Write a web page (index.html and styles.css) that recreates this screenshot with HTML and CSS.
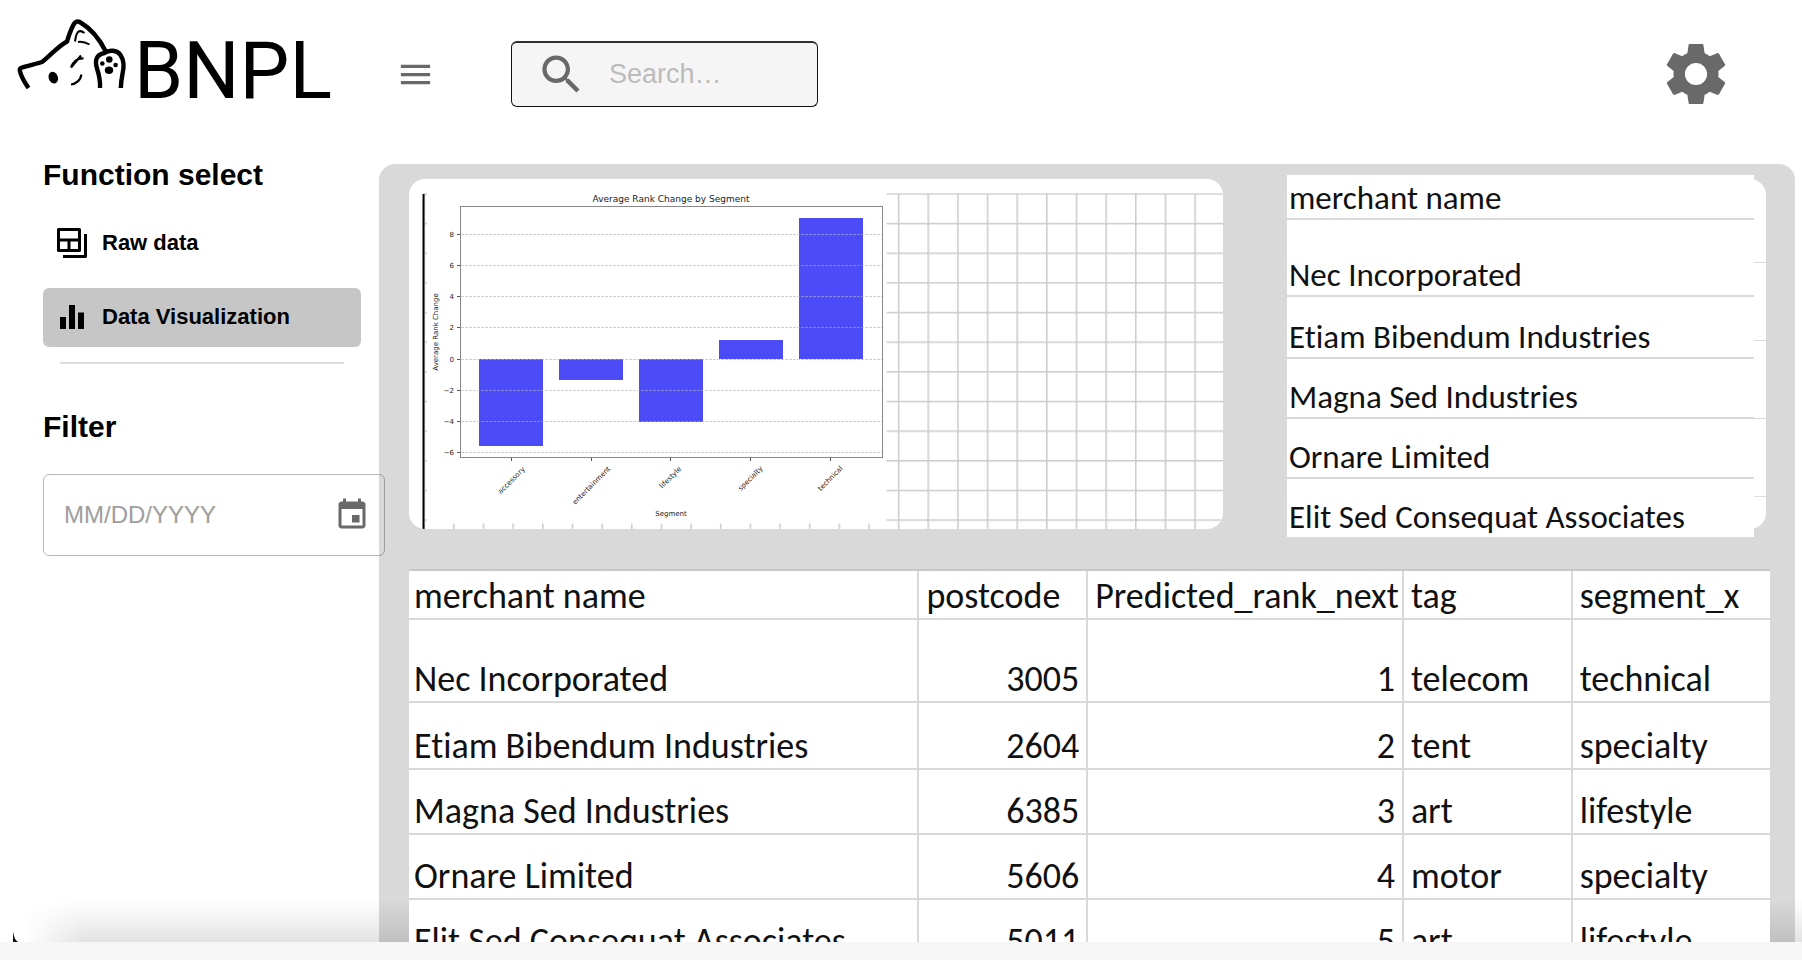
FILE: index.html
```html
<!DOCTYPE html>
<html lang="en">
<head>
<meta charset="utf-8">
<title>BNPL</title>
<link rel="stylesheet" href="styles.css">
</head>
<body>
<div class="app">
  <header class="topbar">
    <a class="logo" href="#" aria-label="BNPL home">
      <svg class="logo-cat" viewBox="16 16 112 76" fill="none" stroke="#000" stroke-linejoin="round" aria-hidden="true">
        <path stroke-width="4.4" d="M28.500 88C25 83 21 76 19.800 70.500C19.600 69 20 68.400 21.500 67.800C28 65.500 36 64 42 62C49 57 57 47 67 41.500C69 35 72 26 75 22.500C76.500 21 78.500 21.300 80.500 22.500C89 27.500 99 38 105.500 51"/>
        <path stroke-width="4.400" d="M100 88C100.500 79 98.500 73 97 68.500C94.500 60 96.500 54.500 104.500 53C109 49.500 117 50 120.500 55C124.500 61 124 68 122.500 74C121.500 79 121 83 120.800 88"/>
        <path stroke-width="2" d="M75 41.500C75.500 38 76.500 33.500 78 32C79.500 30.700 82 31 84.500 33M78 42C82 41.300 86 42.500 89.500 44.500"/>
        <path stroke-width="2.200" d="M71 67.500C73 62 77 58 83.500 58.300M71 67.500L81 55.500M71 84.500C75 84 81 80.500 81.300 74.500"/>
        <g fill="#000" stroke="none">
          <ellipse cx="53.300" cy="77.700" rx="4.600" ry="6" transform="rotate(-20 53.300 77.700)"/>
          <circle cx="109.300" cy="59.500" r="3.300"/>
          <circle cx="102.300" cy="63.500" r="2.300"/>
          <circle cx="115.600" cy="65" r="2.300"/>
          <ellipse cx="109" cy="70.200" rx="4.200" ry="3.700"/>
        </g>
      </svg>
      <span class="logo-text">BNPL</span>
    </a>
    <button class="icon-button menu" type="button" aria-label="Menu">
      <svg viewBox="0 0 24 24" aria-hidden="true"><path d="M3 18h18v-2H3v2zm0-5h18v-2H3v2zm0-7v2h18V6H3z"/></svg>
    </button>
    <label class="search">
      <svg viewBox="0 0 24 24" aria-hidden="true"><path d="M15.500 14h-.79l-.28-.27C15.410 12.590 16 11.110 16 9.500 16 5.910 13.090 3 9.500 3S3 5.910 3 9.500 5.910 16 9.500 16c1.610 0 3.090-.59 4.230-1.570l.27.28v.79l5 4.990L20.490 19l-4.990-5zm-6 0C7.010 14 5 11.990 5 9.500S7.010 5 9.500 5 14 7.010 14 9.500 11.990 14 9.500 14z"/></svg>
      <input type="text" placeholder="Search…" aria-label="Search">
    </label>
    <button class="icon-button settings" type="button" aria-label="Settings">
      <svg viewBox="0 0 24 24" aria-hidden="true"><path d="M19.430 12.980c.04-.32.07-.64.07-.98s-.03-.66-.07-.98l2.110-1.650c.19-.15.24-.42.12-.64l-2-3.460c-.12-.22-.39-.3-.61-.22l-2.490 1c-.52-.4-1.080-.73-1.690-.98l-.38-2.650C14.460 2.180 14.250 2 14 2h-4c-.25 0-.46.18-.49.42l-.38 2.650c-.61.25-1.170.59-1.690.98l-2.490-1c-.23-.09-.49 0-.61.22l-2 3.460c-.13.22-.07.49.12.64l2.110 1.650c-.04.32-.07.65-.07.98s.03.66.07.98l-2.110 1.650c-.19.15-.24.42-.12.64l2 3.460c.12.22.39.3.61.22l2.490-1c.52.4 1.080.73 1.690.98l.38 2.650c.03.24.24.42.49.42h4c.25 0 .46-.18.49-.42l.38-2.650c.61-.25 1.170-.59 1.690-.98l2.490 1c.23.09.49 0 .61-.22l2-3.460c.12-.22.07-.49-.12-.64l-2.110-1.650zM12 15.700c-2.040 0-3.700-1.660-3.700-3.700s1.660-3.700 3.700-3.700 3.700 1.660 3.700 3.700-1.660 3.700-3.700 3.700z"/></svg>
    </button>
  </header>

  <div class="body">
    <aside class="sidebar">
      <h2 class="section-title">Function select</h2>
      <nav class="nav">
        <a class="nav-item" href="#raw">
          <svg viewBox="0 0 24 24" aria-hidden="true"><path fill="none" stroke="#000" stroke-width="2" stroke-linejoin="round" d="M3 3h14v14H3zM3 10h14M10 10v7M21 6v15H6"/></svg>
          Raw data
        </a>
        <a class="nav-item nav-item-active" href="#visual" aria-current="page">
          <svg viewBox="0 0 24 24" aria-hidden="true"><path d="M4 12h4v8H4zM10 4h4v16h-4zM16 9h4v11h-4z"/></svg>
          Data Visualization
        </a>
      </nav>
      <hr class="divider">
      <h2 class="section-title filter-title">Filter</h2>
      <div class="date-field">
        <input type="text" placeholder="MM/DD/YYYY" aria-label="Filter date">
        <button class="icon-button date-button" type="button" aria-label="Choose date">
          <svg viewBox="0 0 24 24" aria-hidden="true"><path d="M17 12h-5v5h5v-5zM16 1v2H8V1H6v2H5c-1.110 0-1.990.9-1.990 2L3 19c0 1.100.89 2 2 2h14c1.100 0 2-.9 2-2V5c0-1.100-.9-2-2-2h-1V1h-2zm3 18H5V8h14v11z"/></svg>
        </button>
      </div>
    </aside>

    <main class="panel">
      <div class="cards">
        <section class="card chart-card">
          <svg class="chart" role="img" aria-label="Average Rank Change by Segment">
            <defs>
              <pattern id="sheet" x="14.400" y="14.200" width="29.650" height="29.650" patternUnits="userSpaceOnUse">
                <path d="M0 .8H29.650M.8 0V29.650" stroke="#cbcbcb" stroke-width="1.500"/>
              </pattern>
            </defs>
            <rect x="14" y="14.200" width="100%" height="336" fill="url(#sheet)"/>
            <rect x="18" y="12" width="459.500" height="332.500" fill="#fff"/>
            <path d="M14.500 15V350" stroke="#000" stroke-width="2"/>
            <g fill="#4b4bf7">
              <rect x="70" y="180" width="64" height="87"/>
              <rect x="150" y="180" width="64" height="21"/>
              <rect x="230" y="180" width="64" height="63"/>
              <rect x="310" y="161" width="64" height="19"/>
              <rect x="390" y="39" width="64" height="141"/>
            </g>
            <path class="chart-grid" d="M52 55.500H473M52 86.500H473M52 117.500H473M52 148.500H473M52 180.500H473M52 211.500H473M52 242.500H473M52 273.500H473"/>
            <rect x="51.500" y="27.500" width="422" height="251" fill="none" stroke="#888"/>
            <path stroke="#555" d="M48 55.500h3M48 86.500h3M48 117.500h3M48 148.500h3M48 180.500h3M48 211.500h3M48 242.500h3M48 273.500h3M102.500 279v3M182.500 279v3M261.500 279v3M341.500 279v3M421.500 279v3"/>
            <text class="chart-title" x="262" y="23">Average Rank Change by Segment</text>
            <g class="chart-ticks">
              <text x="45" y="58">8</text><text x="45" y="89">6</text><text x="45" y="120">4</text><text x="45" y="151">2</text>
              <text x="45" y="183">0</text><text x="45" y="214">−2</text><text x="45" y="245">−4</text><text x="45" y="276">−6</text>
            </g>
            <g class="chart-labels">
              <text transform="translate(104 303) rotate(-45)">accessory</text>
              <text transform="translate(184 308) rotate(-45)">entertainment</text>
              <text transform="translate(263 300) rotate(-45)">lifestyle</text>
              <text transform="translate(343 301) rotate(-45)">specialty</text>
              <text transform="translate(423 301) rotate(-45)">technical</text>
              <text transform="translate(29 153) rotate(-90)">Average Rank Change</text>
              <text x="262" y="337">Segment</text>
            </g>
          </svg>
        </section>
        <section class="card list-card">
          <table class="list">
            <thead><tr><th>merchant name</th></tr></thead>
            <tbody>
              <tr class="first"><td>Nec Incorporated</td></tr>
              <tr class="second"><td>Etiam Bibendum Industries</td></tr>
              <tr><td>Magna Sed Industries</td></tr>
              <tr><td>Ornare Limited</td></tr>
              <tr><td>Elit Sed Consequat Associates</td></tr>
            </tbody>
          </table>
        </section>
      </div>
      <table class="ranks">
        <colgroup><col class="c-name"><col class="c-post"><col class="c-rank"><col class="c-tag"><col></colgroup>
        <thead><tr><th>merchant name</th><th>postcode</th><th>Predicted_rank_next</th><th>tag</th><th>segment_x</th></tr></thead>
        <tbody>
          <tr class="first"><td>Nec Incorporated</td><td class="num">3005</td><td class="num">1</td><td>telecom</td><td>technical</td></tr>
          <tr class="second"><td>Etiam Bibendum Industries</td><td class="num">2604</td><td class="num">2</td><td>tent</td><td>specialty</td></tr>
          <tr><td>Magna Sed Industries</td><td class="num">6385</td><td class="num">3</td><td>art</td><td>lifestyle</td></tr>
          <tr><td>Ornare Limited</td><td class="num">5606</td><td class="num">4</td><td>motor</td><td>specialty</td></tr>
          <tr><td>Elit Sed Consequat Associates</td><td class="num">5011</td><td class="num">5</td><td>art</td><td>lifestyle</td></tr>
        </tbody>
      </table>
    </main>
    <div class="fade"></div>
    <svg class="corner" viewBox="0 0 5 11" aria-hidden="true"><path d="M0 0C.5 5 2 9 5 11H0z" fill="#0b0b18"/></svg>
  </div>
  <div class="strip"></div>
</div>
</body>
</html>
```

FILE: styles.css
```css
* { box-sizing: border-box; }

body {
  margin: 0;
  background: #fff;
  color: #000;
  font-family: "Liberation Sans", Arial, sans-serif;
}

.app {
  display: flex;
  flex-direction: column;
  height: 100vh;
  overflow: hidden;
}

/* Top bar */
.topbar {
  display: flex;
  align-items: center;
  flex: none;
  height: 148px;
  padding: 0 70px 0 16px;
}

.logo {
  display: flex;
  align-self: flex-start;
  flex: 0 0 363px;
  gap: 6px;
  padding-top: 16px;
  color: #000;
  text-decoration: none;
}

.logo-cat { width: 112px; height: 76px; }

.logo-text {
  padding-top: 15px;
  font: 400 79px/80px Roboto, sans-serif;
}

.icon-button {
  display: block;
  flex: none;
  padding: 0;
  border: 0;
  background: none;
  fill: #696969;
}

.icon-button svg { display: block; width: 100%; height: 100%; }

.menu { width: 39px; height: 39px; margin-left: 17px; }

.settings { width: 72px; height: 72px; margin-left: auto; }

.search {
  display: flex;
  align-items: center;
  width: 307px;
  height: 66px;
  margin-left: 76px;
  padding-left: 24px;
  gap: 22px;
  border: 1px solid #111;
  border-top: 2px solid #2b2f30;
  border-radius: 6px;
  background: #f5f5f5;
}

.search svg { flex: none; width: 51px; height: 51px; fill: #696969; }

.search input,
.date-field input {
  flex: 1;
  min-width: 0;
  padding: 0;
  border: 0;
  outline: 0;
  background: none;
  font: 27px "Liberation Sans", Arial, sans-serif;
}

.search input::placeholder { color: #bbb; opacity: 1; }

/* Body */
.body {
  position: relative;
  display: flex;
  flex: 1;
  min-height: 0;
  padding-right: 7px;
  overflow: hidden;
}

.sidebar {
  position: relative;
  z-index: 2;
  flex: 0 0 379px;
  min-width: 0;
  padding: 9px 18px 0 43px;
}

.section-title {
  margin: 0;
  font-size: 30px;
  line-height: 36px;
}

.nav {
  display: grid;
  gap: 15px;
  margin-top: 21px;
}

.nav-item {
  display: flex;
  align-items: center;
  gap: 12px;
  height: 59px;
  padding: 0 0 2px 11px;
  border-radius: 6px;
  color: #000;
  font-size: 22px;
  font-weight: 700;
  text-decoration: none;
}

.nav-item svg { width: 36px; height: 36px; }

.nav-item-active { background: #c6c6c6; }

.divider {
  height: 2px;
  margin: 15px 17px 0;
  border: 0;
  background: #dcdcdc;
}

.filter-title { margin-top: 45px; }

.date-field {
  display: flex;
  align-items: center;
  width: 342px;
  height: 82px;
  margin-top: 29px;
  padding: 0 14px 0 20px;
  border: 1px solid rgba(0, 0, 0, .28);
  border-radius: 6px;
}

.date-field input { font-size: 24px; }
.date-field input::placeholder { color: #9e9e9e; opacity: 1; }

.date-button { width: 36px; height: 36px; }

/* Panel */
.panel {
  flex: 1;
  min-width: 0;
  margin-top: 16px;
  padding: 15px 25px 0 30px;
  border-radius: 16px 16px 0 0;
  background: #d9d9d9;
}

.cards {
  display: grid;
  grid-template-columns: 814fr 479fr;
  gap: 64px;
  margin-right: 4px;
}

.card {
  height: 350px;
  border-radius: 16px;
  background: #fff;
}

.chart-card { overflow: hidden; }

.chart {
  display: block;
  width: 100%;
  height: 100%;
  font-family: "DejaVu Sans", sans-serif;
}

.chart text { fill: #222; text-anchor: middle; }
.chart .chart-title { font-size: 9px; }
.chart .chart-ticks text { font-size: 7px; text-anchor: end; }
.chart .chart-labels text { font-size: 7px; }

.chart-grid {
  stroke: #b0b0b0;
  stroke-opacity: .6;
  stroke-dasharray: 3 1;
}

.list-card {
  background: repeating-linear-gradient(#fff 0 76px, #ddd 76px 77px, #fff 77px 78px) 0 7px, #fff;
}

/* Tables */
.list,
.ranks {
  border-collapse: separate;
  border-spacing: 0;
  table-layout: fixed;
  background: #fff;
  color: #111;
  font-family: Carlito, Calibri, Lato, sans-serif;
  font-variant-ligatures: none;
  white-space: nowrap;
}

.list th,
.list td,
.ranks th,
.ranks td {
  border-bottom: 2px solid #d9d9d9;
  font-weight: 400;
  text-align: left;
  vertical-align: bottom;
}

.list {
  position: relative;
  top: -4px;
  width: calc(100% - 12px);
  font-size: 33px;
  line-height: 36px;
}

.list th,
.list td { height: 60px; padding: 0 0 2px 2px; }
.list th { height: 45px; }
.list .first td { height: 77px; }
.list .second td { height: 62px; }
.list tr:last-child td { height: 58px; border-bottom-color: #fff; }
.list tbody tr:last-child td { padding-bottom: 0; }

.ranks {
  position: relative;
  z-index: 1;
  width: 100%;
  margin-top: 40px;
  border-top: 2px solid #c8c8c8;
  font-size: 36px;
  line-height: 40px;
}

.ranks th,
.ranks td {
  height: 65px;
  padding: 0 7px 2px 7px;
  border-right: 2px solid #d9d9d9;
}

.ranks th { height: 49px; }
.ranks .first td { height: 83px; }
.ranks .second td { height: 67px; }
.ranks th:first-child,
.ranks td:first-child { padding-left: 5px; }
.ranks th:last-child,
.ranks td:last-child { border-right: 0; }
.ranks .num { text-align: right; }

.c-name { width: 37.5%; }
.c-post { width: 12.4%; }
.c-rank { width: 23.2%; }
.c-tag { width: 12.4%; }

/* Bottom edge */
.fade {
  position: absolute;
  right: 0;
  bottom: 0;
  left: 24px;
  height: 42px;
  background: linear-gradient(transparent, rgba(0, 0, 0, .11));
  -webkit-mask-image: linear-gradient(90deg, transparent, #000 60px);
  mask-image: linear-gradient(90deg, transparent, #000 60px);
}

.corner {
  position: absolute;
  bottom: 0;
  left: 13px;
  width: 5px;
  height: 11px;
}

.strip { flex: none; height: 18px; background: #f6f6f6; }
```
